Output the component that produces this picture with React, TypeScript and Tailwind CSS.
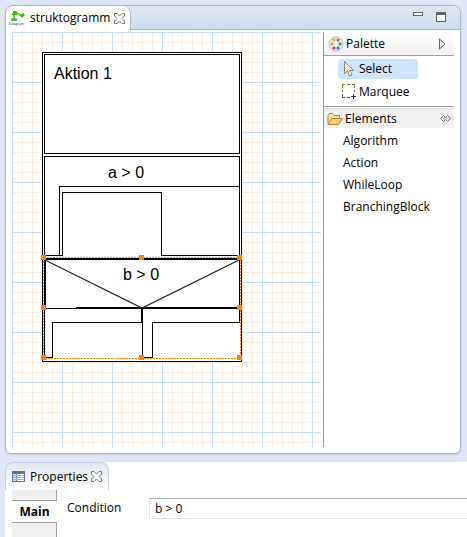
import { useState } from "react";
import type { ReactNode } from "react";

function CloseIcon() {
  return (
    <svg width="11" height="11" viewBox="0 0 11 11" fill="#fff" stroke="#777" strokeWidth="1">
      <path d="M.5 .5H3L5.500 3 8 .5h2.500V3L8 5.500 10.500 8v2.500H8L5.500 8 3 10.500H.5V8L3 5.500.5 3z" />
    </svg>
  );
}

function DiagramIcon() {
  return (
    <svg width="17" height="17" viewBox="0 0 17 17">
      <path d="M5 5L9 3M9 3l4 3M5 5v5" stroke="#49c21d" strokeWidth="1.500" fill="none" />
      <rect x="4" y="1" width="4" height="3" fill="#3fbf14" />
      <rect x="3" y="3" width="5" height="2" fill="#3fbf14" />
      <path d="M10 5l4-2 2 2-3 3z" fill="#3fbf14" />
      <ellipse cx="5" cy="9.500" rx="3" ry="1.500" fill="#3fbf14" />
      <text x="0" y="15" fontSize="4" fill="#44449a" fontFamily="Liberation Sans, sans-serif">Diagram</text>
    </svg>
  );
}

function PaletteIcon() {
  return (
    <svg width="16" height="16" viewBox="0 0 16 16">
      <circle cx="8" cy="8" r="7" fill="#e6edfa" stroke="#a9b9dc" />
      <circle cx="8" cy="8" r="1.500" fill="#fff" />
      <circle cx="6" cy="4" r="1.500" fill="#f3a21b" />
      <circle cx="10" cy="4" r="1.500" fill="#e5541e" />
      <circle cx="12" cy="8" r="1.700" fill="#45a823" />
      <circle cx="10" cy="12" r="1.500" fill="#3467c8" />
      <circle cx="6" cy="12" r="1.500" fill="#c92c3c" />
      <circle cx="4" cy="8" r="1.700" fill="#f4a51c" />
    </svg>
  );
}

function CursorIcon() {
  return (
    <svg width="10" height="16" viewBox="0 0 10 16">
      <path d="M.5 .5v12l3-2.500 2 5 2.500-1-2-4.500h3.500z" fill="#fffbe8" stroke="#8a8672" />
    </svg>
  );
}

function MarqueeIcon() {
  return (
    <svg width="15" height="16" viewBox="0 0 15 16" fill="none" shapeRendering="crispEdges">
      <path d="M.5 4V.5H3M5 .5h3M10 .5h2.500V4M.5 6v2" stroke="#857a35" />
      <path d="M12.500 6v2" stroke="#5c6650" />
      <path d="M.5 10v3.500H3M5 13.500h3" stroke="#1d5fa8" />
      <path d="M11.500 10v5M9 12.500h5" stroke="#163a6b" />
    </svg>
  );
}

function FolderIcon() {
  return (
    <svg width="16" height="12" viewBox="0 0 16 12">
      <path d="M1 10.500V2.500L2.500 .5h3L7 2.500h5.500v3" fill="#fbe5ac" stroke="#b77d31" />
      <path d="M1 11.500L4.500 5.500h11L11.500 11.500z" fill="#f8cd7c" stroke="#b77d31" />
    </svg>
  );
}

function PinIcon() {
  return (
    <svg width="11" height="7" viewBox="0 0 11 7" fill="#fff" stroke="#777">
      <path d="M3.500 .5L.5 3.500l3 3 2-2 2 2 3-3-3-3-2 2z" />
      <path d="M4 3.500l1.500-1.500 1.500 1.500-1.500 1.500z" />
    </svg>
  );
}

function TableIcon() {
  return (
    <svg width="13" height="11" viewBox="0 0 13 11" shapeRendering="crispEdges">
      <rect width="13" height="11" fill="#5b7899" />
      <rect x="1" y="3" width="3" height="7" fill="#cfdcea" />
      <rect x="5" y="3" width="7" height="7" fill="#fff" />
      <path d="M1 4.500h11M1 6.500h11M1 8.500h11" stroke="#a3b6cc" />
    </svg>
  );
}

const handles = [
  [43, 257], [141, 257], [239, 257],
  [43, 307], [239, 307],
  [43, 357], [141, 357], [239, 357],
];

function DiagramCanvas() {
  return (
    <svg className="block h-[415px] w-full" role="img" aria-label="struktogramm">
      <defs>
        <pattern id="grid" width="50" height="50" patternUnits="userSpaceOnUse">
          <path
            d="M10.500 0v50M20.500 0v50M30.500 0v50M40.500 0v50M0 10.500h50M0 20.500h50M0 30.500h50M0 40.500h50"
            stroke="#fbebdd"
          />
          <path d="M.5 0v50M0 .5h50" stroke="#c8def5" />
        </pattern>
      </defs>
      <rect width="100%" height="100%" fill="url(#grid)" />
      <g transform="translate(-12 -32)">
        <g fill="#fff" stroke="#000" shapeRendering="crispEdges">
          <rect x="42.500" y="52.500" width="199" height="309" />
          <rect x="44.500" y="54.500" width="195" height="99" />
          <path d="M44.500 255.500V156.500h195v99H161.500V192.500H62.500v63H44" />
          <path d="M59.500 255V186.500H239" fill="none" />
          <path d="M44 259h196M45 258v50M76 308h163M142 308v15" strokeWidth="2" />
          <path d="M44 308.500h32M142.500 308v50M239.500 255v67.500H152.500v35h-10M142.500 322.500H52.500v35h-8V308" fill="none" />
        </g>
        <path d="M45 260l97 48 97-48" fill="none" stroke="#222" strokeWidth="1.200" />
        <g fontFamily="Liberation Sans, Arial, sans-serif" fontSize="16" fill="#000">
          <text x="54" y="79">Aktion 1</text>
          <text x="108" y="178">a &gt; 0</text>
          <text x="123" y="280">b &gt; 0</text>
        </g>
        <g shapeRendering="crispEdges">
          <rect x="43.500" y="257.500" width="197" height="101" fill="none" stroke="#fff" />
          <rect x="43.500" y="257.500" width="197" height="101" fill="none" stroke="#f5820b" strokeDasharray="2 1" />
          {handles.map(([x, y]) => (
            <rect key={`${x}-${y}`} x={x - 2} y={y - 2} width="5" height="5" fill="#ff8000" />
          ))}
        </g>
      </g>
    </svg>
  );
}

function Tool({ icon, label, active, onClick }: { icon: ReactNode; label: string; active: boolean; onClick: () => void }) {
  return (
    <button
      type="button"
      aria-pressed={active}
      onClick={onClick}
      className={`flex h-5 w-20 items-center rounded-sm pl-1 ${active ? "bg-[#cfe3fb]" : ""}`}
    >
      <span className="flex w-[17px] shrink-0">{icon}</span>
      {label}
    </button>
  );
}

function Palette() {
  const [tool, setTool] = useState("Select");
  return (
    <aside className="w-[131px] shrink-0 border-l border-[#9a9a9a]">
      <button type="button" className="flex h-6 w-full items-center border-b border-[#a0a0a0] bg-linear-to-b from-white to-[#f0f0f0] pr-2 pl-1">
        <PaletteIcon />
        <span className="ml-0.5">Palette</span>
        <svg className="ml-auto" width="7" height="12" viewBox="0 0 7 12" fill="#fff" stroke="#666">
          <path d="M.5 1v10l5.500-5z" />
        </svg>
      </button>
      <div className="flex h-[51px] flex-col gap-[3px] border-b border-[#a0a0a0] pt-[3px] pl-3.5">
        <Tool icon={<span className="pl-0.5"><CursorIcon /></span>} label="Select" active={tool === "Select"} onClick={() => setTool("Select")} />
        <Tool icon={<MarqueeIcon />} label="Marquee" active={tool === "Marquee"} onClick={() => setTool("Marquee")} />
      </div>
      <button type="button" className="mt-px flex h-5 w-full items-center border-t border-[#dcdcdc] bg-[#f1f1f1] pr-[3px] pl-[3px]">
        <FolderIcon />
        <span className="ml-0.5">Elements</span>
        <span className="ml-auto"><PinIcon /></span>
      </button>
      <ul className="pt-0.5 pl-[19px]">
        {["Algorithm", "Action", "WhileLoop", "BranchingBlock"].map((name) => (
          <li key={name}>
            <button type="button" className="block h-[22px]">{name}</button>
          </li>
        ))}
      </ul>
    </aside>
  );
}

function Editor() {
  return (
    <section className="mr-1.5 ml-[5px] rounded-t-lg rounded-b-md border border-[#b0b5c8] bg-white shadow-sm">
      <header className="flex h-6 rounded-t-lg bg-linear-to-b from-[#dde7f0] to-[#cbdcee]">
        <div className="flex w-[125px] shrink-0 items-center rounded-t-lg border-r border-[#b0b5c8] bg-white pl-[3px]">
          <DiagramIcon />
          <span className="ml-1">struktogramm</span>
          <button type="button" aria-label="Close struktogramm" className="ml-1"><CloseIcon /></button>
        </div>
        <div className="flex flex-1 items-start justify-end gap-[13px] border-b border-[#b0b5c8] pt-1.5 pr-3.5">
          <button type="button" aria-label="Minimize" className="h-1 w-2.5 border border-[#666] bg-white" />
          <button type="button" aria-label="Maximize" className="h-2.5 w-2.5 border border-t-[3px] border-[#666] bg-white" />
        </div>
      </header>
      <div className="flex px-1.5 pt-0.5 pb-1.5">
        <div className="mr-0.5 min-w-0 flex-1"><DiagramCanvas /></div>
        <Palette />
      </div>
    </section>
  );
}

function Properties() {
  return (
    <section className="ml-[5px] flex flex-1 flex-col rounded-tl-lg bg-white">
      <header className="flex">
        <div className="flex h-7 w-[104px] items-center rounded-t-lg border-t border-r border-l border-[#c9cede] bg-linear-to-b from-[#e3e5ef] to-white pl-1.5">
          <TableIcon />
          <span className="ml-[5px]">Properties</span>
          <button type="button" aria-label="Close properties" className="ml-[3px]"><CloseIcon /></button>
        </div>
      </header>
      <div className="flex flex-1 pl-[7px]">
        <div className="flex w-[45px] shrink-0 flex-col">
          <div className="h-[11px] border-r border-b border-[#a0a0a0] bg-[#f0f0f0]" />
          <button type="button" className="h-[21px] font-bold">Main</button>
          <div className="flex-1 border-t border-r border-[#a0a0a0] bg-[#f0f0f0]" />
        </div>
        <div className="flex flex-1 items-start pt-2 pl-2.5">
          <label htmlFor="condition" className="w-[82px] shrink-0 pt-0.5">Condition</label>
          <input
            id="condition"
            type="text"
            defaultValue="b > 0"
            className="h-[21px] min-w-0 flex-1 border border-r-0 border-[#e2e3ea] border-t-[#abadb3] bg-white px-[5px]"
          />
        </div>
      </div>
    </section>
  );
}

export default function App() {
  return (
    <main className="flex min-h-screen flex-col gap-2 bg-[#e1e6f6] pt-[5px] font-['Open_Sans','Noto_Sans',sans-serif] text-[12px] leading-4 text-black">
      <Editor />
      <Properties />
    </main>
  );
}
